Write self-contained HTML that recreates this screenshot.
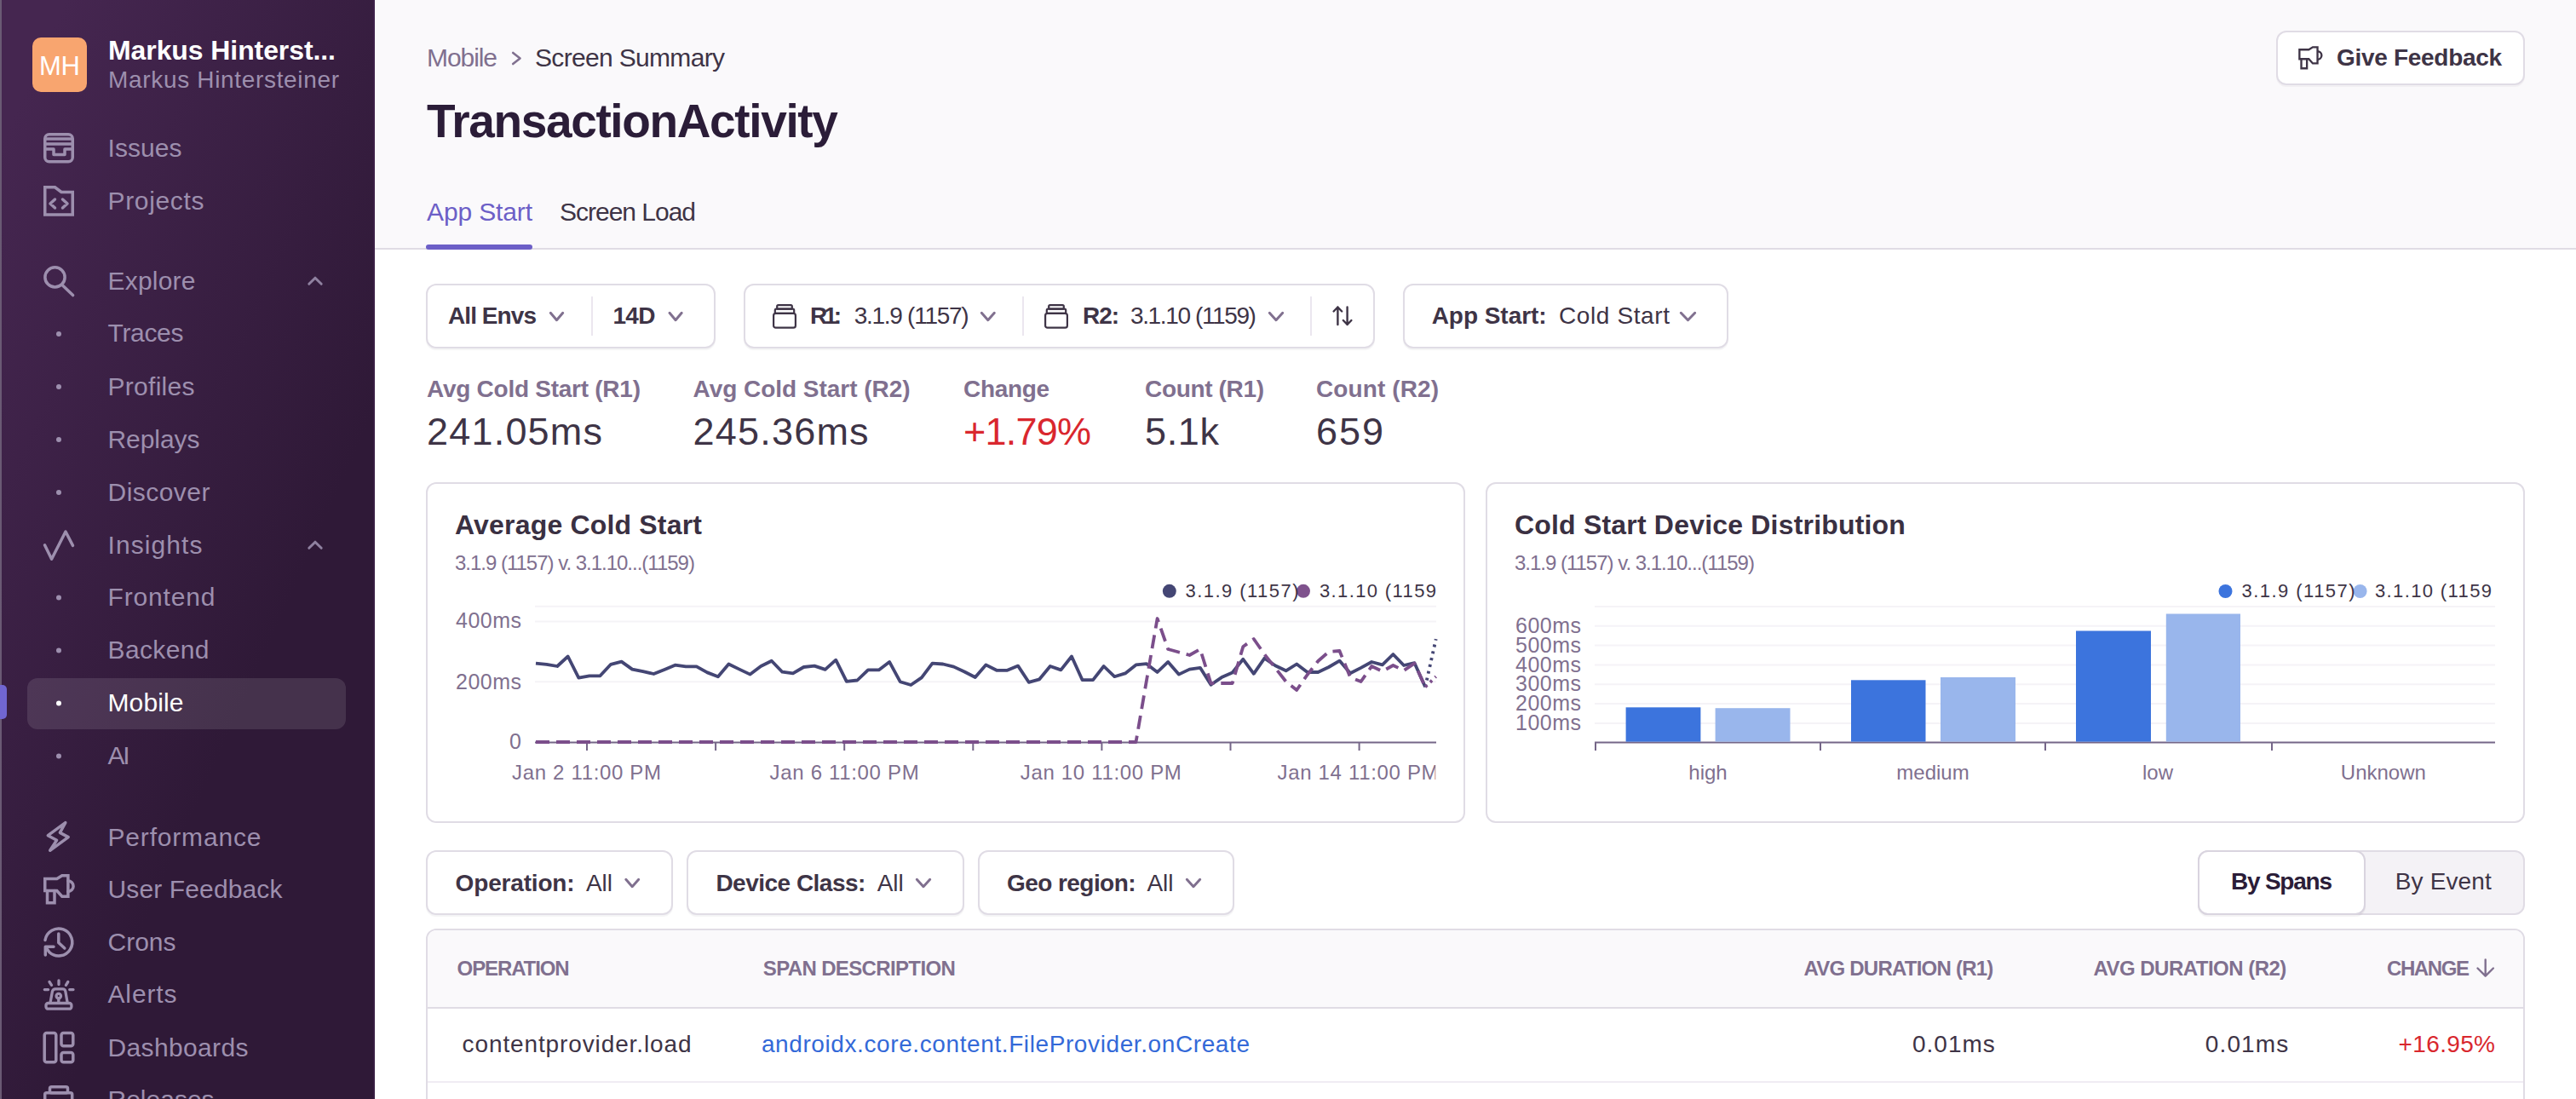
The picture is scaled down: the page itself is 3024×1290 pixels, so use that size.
<!DOCTYPE html>
<html><head><meta charset="utf-8">
<style>
html,body{margin:0;padding:0;}
body{width:3024px;height:1290px;overflow:hidden;position:relative;background:#ffffff;font-family:"Liberation Sans",sans-serif;}
.t{position:absolute;line-height:1;white-space:nowrap;}
.a{position:absolute;}
.box{position:absolute;box-sizing:border-box;border:2px solid #e0dce5;border-radius:12px;background:#fff;}
svg{position:absolute;overflow:visible;}
</style></head><body>
<!-- SIDEBAR -->
<div class="a" style="left:0;top:0;width:440px;height:1290px;background:linear-gradient(294.17deg,#2f1937 35.57%,#452650 92.42%,#452650 92.42%);"></div>
<div class="a" style="left:0;top:0;width:2px;height:1290px;background:#6a5a74;"></div>
<div class="a" style="left:438px;top:0;width:2px;height:1290px;background:rgba(90,50,110,0.22);"></div>
<div class="a" style="left:38px;top:44px;width:64px;height:64px;border-radius:10px;background:#f8a56f;"></div>
<div class="a" style="left:32px;top:796px;width:374px;height:60px;border-radius:12px;background:rgba(255,255,255,0.11);"></div>
<div class="a" style="left:0;top:804px;width:8px;height:40px;border-radius:0 5px 5px 0;background:#7166d2;"></div>
<svg width="440" height="1290" style="left:0;top:0" fill="none" stroke="#9d8fae" stroke-width="3.5" stroke-linecap="round" stroke-linejoin="round">
 <!-- issues -->
 <g transform="translate(51,156)"><rect x="1.75" y="1.75" width="32.5" height="32" rx="5"/><path d="M1.75 7H34.25M1.75 13H34.25M1.75 19H12V25.5H25V19H34.25" stroke-linecap="butt"/></g>
 <!-- projects -->
 <g transform="translate(51,218)"><path d="M1.75 1.75H13.5L21 7.5H34.25V34H1.75Z" stroke-linejoin="miter"/><path d="M13.5 16L8 21L13.5 26M22.5 16L28 21L22.5 26"/></g>
 <!-- explore -->
 <circle cx="64.5" cy="325.4" r="11.6"/><path d="M73.5 335L85.6 346.6"/>
 <!-- insights -->
 <path d="M52.5 639.8L60.6 656.2L77 624L85.5 640.4"/>
 <!-- performance -->
 <path d="M76.8 965.6L56.3 980.7L66.6 986.3L58.7 998.3L80.2 982.6L70.4 977.4Z"/>
 <!-- user feedback -->
 <g transform="translate(51,1026)" stroke-linejoin="miter"><path d="M1.75 5.4H15.8L21.8 1.75H28.9V26.2H21.8L15.8 19.6H1.75Z"/><path d="M28.9 8A6.2 6.2 0 0 1 28.9 20.4"/><path d="M4.5 19.6V33.7H13V19.6"/></g>
 <!-- crons -->
 <path d="M53 1103.5A16 16 0 1 1 58 1117.8L53.8 1112"/><path d="M63 1111.3H53.3V1121"/><path d="M68.8 1096V1106.5L75.8 1113"/>
 <!-- alerts -->
 <g stroke-width="3.3"><rect x="54" y="1177.5" width="29.9" height="6.7" rx="2.5"/><path d="M59.2 1176L61.5 1163.5Q62.3 1160.8 65 1160.8H73.5Q76.2 1160.8 76.8 1163.5L79 1176"/><circle cx="68.8" cy="1169.1" r="2.7"/><path d="M68.8 1172V1176"/><path d="M69 1151V1155.5M58 1152.5L60.5 1156.3M79.8 1152.5L77.4 1156.3M52.3 1161.6H56.6M81.7 1161.6H86"/></g>
 <!-- dashboards -->
 <rect x="52.2" y="1212.5" width="13.6" height="34.2" rx="2.5"/><rect x="72" y="1212.5" width="13.8" height="15.2" rx="2.5"/><rect x="72" y="1235.5" width="13.8" height="11.2" rx="2.5"/>
 <!-- releases -->
 <rect x="58.5" y="1275.7" width="21" height="7" rx="2"/><rect x="52.7" y="1282.7" width="32" height="9" rx="2"/>
 <!-- chevrons -->
 <path d="M362.8 333.3L370 326.2L377.2 333.3" stroke-width="3" stroke="#8f81a0"/>
 <path d="M362.8 643.3L370 636.2L377.2 643.3" stroke-width="3" stroke="#8f81a0"/>
</svg>
<svg width="440" height="1290" style="left:0;top:0" fill="#9d8fae">
 <circle cx="69" cy="392" r="3"/><circle cx="69" cy="454" r="3"/><circle cx="69" cy="516" r="3"/><circle cx="69" cy="578" r="3"/>
 <circle cx="69" cy="701.5" r="3"/><circle cx="69" cy="763.5" r="3"/><circle cx="69" cy="825.5" r="3" fill="#ffffff"/><circle cx="69" cy="887.5" r="3"/>
</svg>
<!-- HEADER -->
<div class="a" style="left:440px;top:0;width:2584px;height:292px;background:#faf9fb;"></div>
<div class="a" style="left:440px;top:291px;width:2584px;height:2px;background:#e0dce5;"></div>
<div class="a" style="left:500px;top:287px;width:125px;height:6px;border-radius:3px;background:#6c5fc7;"></div>
<svg width="20" height="20" style="left:598px;top:58px" fill="none" stroke="#80708f" stroke-width="2.6" stroke-linecap="round" stroke-linejoin="round"><path d="M4.2 4L12.5 10.5L4.2 17"/></svg>
<div class="box" style="left:2672px;top:36px;width:292px;height:64px;box-shadow:0 2px 0 rgba(43,34,51,0.04);"></div>
<svg width="40" height="40" style="left:2694px;top:50px" fill="none" stroke="#3e3446" stroke-width="3" stroke-linejoin="miter">
 <g transform="translate(4,4) scale(0.78)"><path d="M1.75 5.4H15.8L21.8 1.75H28.9V26.2H21.8L15.8 19.6H1.75Z"/><path d="M28.9 8A6.2 6.2 0 0 1 28.9 20.4"/><path d="M4.5 19.6V33.7H13V19.6"/></g>
</svg>
<!--REST-->
<div class="box" style="left:500px;top:333px;width:340px;height:76px;box-shadow:0 2px 1px rgba(43,34,51,0.05);"></div>
<div class="box" style="left:873px;top:333px;width:741px;height:76px;box-shadow:0 2px 1px rgba(43,34,51,0.05);"></div>
<div class="box" style="left:1647px;top:333px;width:382px;height:76px;box-shadow:0 2px 1px rgba(43,34,51,0.05);"></div>
<div class="box" style="left:500px;top:998px;width:290px;height:76px;box-shadow:0 2px 1px rgba(43,34,51,0.05);"></div>
<div class="box" style="left:806px;top:998px;width:326px;height:76px;box-shadow:0 2px 1px rgba(43,34,51,0.05);"></div>
<div class="box" style="left:1148px;top:998px;width:301px;height:76px;box-shadow:0 2px 1px rgba(43,34,51,0.05);"></div>
<div class="a" style="left:694px;top:348px;width:2px;height:46px;background:#ebe6ef;"></div>
<div class="a" style="left:1200px;top:348px;width:2px;height:46px;background:#ebe6ef;"></div>
<div class="a" style="left:1538px;top:348px;width:2px;height:46px;background:#ebe6ef;"></div>
<div class="box" style="left:500px;top:566px;width:1220px;height:400px;"></div>
<div class="box" style="left:1744px;top:566px;width:1220px;height:400px;"></div>
<svg width="3024" height="1290" style="left:0;top:0" fill="none" stroke-linecap="round" stroke-linejoin="round">
<path d="M646.3 367.3L653.5 375.7L660.7 367.3" stroke="#80708f" stroke-width="3"/>
<path d="M786.0 367.3L793.1 375.7L800.2 367.3" stroke="#80708f" stroke-width="3"/>
<path d="M1152.3 367.3L1159.8 375.7L1167.3 367.3" stroke="#80708f" stroke-width="3"/>
<path d="M1490.3 367.3L1498.0 375.7L1505.7 367.3" stroke="#80708f" stroke-width="3"/>
<path d="M1973.3 367.3L1981.5 375.7L1989.7 367.3" stroke="#80708f" stroke-width="3"/>
<path d="M734.8 1032.3L742.2 1040.7L749.7 1032.3" stroke="#80708f" stroke-width="3"/>
<path d="M1076.3 1032.3L1084.0 1040.7L1091.7 1032.3" stroke="#80708f" stroke-width="3"/>
<path d="M1393.3 1032.3L1401.0 1040.7L1408.7 1032.3" stroke="#80708f" stroke-width="3"/>
<g transform="translate(907,357)" stroke="#3e3446" stroke-width="2.2"><rect x="5.2" y="1.1" width="17.6" height="4.6" rx="1.5"/><rect x="2.8" y="5.7" width="22.4" height="5.2" rx="1.5"/><rect x="1.1" y="10.9" width="25.8" height="16.8" rx="2.5"/></g>
<g transform="translate(1226,357)" stroke="#3e3446" stroke-width="2.2"><rect x="5.2" y="1.1" width="17.6" height="4.6" rx="1.5"/><rect x="2.8" y="5.7" width="22.4" height="5.2" rx="1.5"/><rect x="1.1" y="10.9" width="25.8" height="16.8" rx="2.5"/></g>
<g stroke="#3e3446" stroke-width="2.4"><path d="M1570.4 360.5V381M1565.6 365.5L1570.4 360.5L1575.2 365.5"/><path d="M1581.6 360.5V381M1576.8 376L1581.6 381L1586.4 376"/></g>
</svg>
<!--REST2-->
<div class="a" style="left:500px;top:1090px;width:2464px;height:400px;box-sizing:border-box;border:2px solid #e0dce5;border-radius:12px;background:#fff;overflow:hidden;"><div class="a" style="left:0;top:0;width:100%;height:90px;background:#faf9fb;border-bottom:2px solid #e0dce5;"></div><div class="a" style="left:0;top:177px;width:100%;height:2px;background:#f0ecf3;"></div></div>
<div class="a" style="left:2580px;top:998px;width:384px;height:76px;box-sizing:border-box;border:2px solid #e0dce5;border-radius:12px;background:#f4f2f6;"></div>
<div class="a" style="left:2580px;top:998px;width:197px;height:76px;box-sizing:border-box;border:2px solid #d9d4df;border-radius:12px;background:#fff;box-shadow:0 2px 1px rgba(43,34,51,0.06);"></div>
<svg width="3024" height="1290" style="left:0;top:0" fill="none" stroke-linecap="round" stroke-linejoin="round"><path d="M2917.7 1126.5V1145.5M2908.5 1136.5L2917.7 1145.7L2926.9 1136.5" stroke="#80708f" stroke-width="2.4"/></svg>
<!--ENDREST2-->
<!--CHARTS-->
<svg width="3024" height="1290" style="left:0;top:0" fill="none">
<path d="M628 711.8H1686" stroke="#f5f3f7" stroke-width="2"/>
<path d="M628 729.5H1686" stroke="#f5f3f7" stroke-width="2"/>
<path d="M628 800.3H1686" stroke="#f5f3f7" stroke-width="2"/>
<path d="M628 871.6H1686" stroke="#756688" stroke-width="2"/>
<path d="M689.0 871V881" stroke="#756688" stroke-width="2"/>
<path d="M840.1 871V881" stroke="#756688" stroke-width="2"/>
<path d="M991.2 871V881" stroke="#756688" stroke-width="2"/>
<path d="M1142.3 871V881" stroke="#756688" stroke-width="2"/>
<path d="M1293.4 871V881" stroke="#756688" stroke-width="2"/>
<path d="M1444.5 871V881" stroke="#756688" stroke-width="2"/>
<path d="M1595.6 871V881" stroke="#756688" stroke-width="2"/>
<polyline points="629.0,778.6 641.6,779.8 654.2,782.0 666.7,770.5 679.3,795.6 691.9,793.3 704.5,793.3 717.1,779.8 729.6,776.6 742.2,785.6 754.8,788.1 767.4,791.0 780.0,785.9 792.5,780.7 805.1,782.4 817.7,782.4 830.3,789.4 842.9,794.2 855.4,779.5 868.0,785.6 880.6,791.6 893.2,782.0 905.8,775.7 918.3,788.7 930.9,790.4 943.5,783.0 956.1,781.6 968.7,785.9 981.2,774.7 993.8,799.9 1006.4,798.5 1019.0,786.4 1031.6,786.4 1044.1,776.9 1056.7,800.2 1069.3,804.0 1081.9,795.4 1094.5,778.6 1107.0,779.5 1119.6,782.6 1132.2,788.5 1144.8,795.0 1157.3,780.4 1169.9,786.8 1182.5,786.8 1195.1,781.6 1207.7,800.8 1220.2,797.3 1232.8,782.0 1245.4,786.4 1258.0,770.5 1270.6,798.2 1283.1,798.2 1295.7,782.0 1308.3,794.2 1320.9,790.4 1333.5,780.4 1346.0,779.2 1358.6,789.0 1371.2,776.9 1383.8,791.6 1396.4,785.6 1408.9,783.8 1421.5,803.8 1434.1,795.1 1446.7,789.4 1459.3,773.8 1471.8,790.8 1484.4,772.6 1497.0,781.3 1509.6,787.3 1522.2,779.5 1534.7,789.0 1547.3,789.0 1559.9,783.0 1572.5,775.6 1585.1,790.3 1597.6,783.9 1610.2,777.0 1622.8,780.4 1635.4,768.0 1648.0,781.0 1660.5,778.2 1673.1,806.3" stroke="#444674" stroke-width="3.8" stroke-linejoin="round"/>
<polyline points="1673.1,806.3 1685.7,750.1" stroke="#444674" stroke-width="3.8" stroke-dasharray="3 5"/>
<polyline points="629.0,871.0 641.6,871.0 654.2,871.0 666.7,871.0 679.3,871.0 691.9,871.0 704.5,871.0 717.1,871.0 729.6,871.0 742.2,871.0 754.8,871.0 767.4,871.0 780.0,871.0 792.5,871.0 805.1,871.0 817.7,871.0 830.3,871.0 842.9,871.0 855.4,871.0 868.0,871.0 880.6,871.0 893.2,871.0 905.8,871.0 918.3,871.0 930.9,871.0 943.5,871.0 956.1,871.0 968.7,871.0 981.2,871.0 993.8,871.0 1006.4,871.0 1019.0,871.0 1031.6,871.0 1044.1,871.0 1056.7,871.0 1069.3,871.0 1081.9,871.0 1094.5,871.0 1107.0,871.0 1119.6,871.0 1132.2,871.0 1144.8,871.0 1157.3,871.0 1169.9,871.0 1182.5,871.0 1195.1,871.0 1207.7,871.0 1220.2,871.0 1232.8,871.0 1245.4,871.0 1258.0,871.0 1270.6,871.0 1283.1,871.0 1295.7,871.0 1308.3,871.0 1320.9,871.0 1333.5,871.0 1346.0,798.5 1358.6,726.0 1371.2,762.0 1383.8,765.5 1396.4,769.0 1408.9,762.0 1421.5,802.0 1434.1,802.0 1446.7,802.0 1459.3,759.0 1471.8,750.0 1484.4,768.0 1497.0,784.0 1509.6,800.0 1522.2,810.0 1534.7,792.0 1547.3,776.0 1559.9,765.0 1572.5,764.0 1585.1,795.0 1597.6,800.0 1610.2,782.0 1622.8,788.0 1635.4,781.0 1648.0,787.0 1660.5,778.7 1673.1,806.3" stroke="#7b4e8b" stroke-width="3.8" stroke-dasharray="16 8" stroke-linejoin="round"/>
<polyline points="1673.1,806.3 1685.7,794.2" stroke="#7b4e8b" stroke-width="3.8" stroke-dasharray="3 5"/>
<circle cx="1372.8" cy="693.8" r="8" fill="#444674"/><circle cx="1530" cy="693.8" r="8" fill="#7f528d"/>
<circle cx="2612.5" cy="694" r="8" fill="#3c74dd"/><circle cx="2770.6" cy="694" r="8" fill="#99b6ec"/>
<path d="M1872 849.0H2929" stroke="#f5f3f7" stroke-width="2"/>
<path d="M1872 826.1H2929" stroke="#f5f3f7" stroke-width="2"/>
<path d="M1872 803.3H2929" stroke="#f5f3f7" stroke-width="2"/>
<path d="M1872 780.5H2929" stroke="#f5f3f7" stroke-width="2"/>
<path d="M1872 757.6H2929" stroke="#f5f3f7" stroke-width="2"/>
<path d="M1872 734.8H2929" stroke="#f5f3f7" stroke-width="2"/>
<path d="M1872 712.0H2929" stroke="#f5f3f7" stroke-width="2"/>
<path d="M1872 871.6H2929" stroke="#756688" stroke-width="2"/>
<path d="M1873 871V881" stroke="#756688" stroke-width="2"/>
<path d="M2137 871V881" stroke="#756688" stroke-width="2"/>
<path d="M2401 871V881" stroke="#756688" stroke-width="2"/>
<path d="M2667 871V881" stroke="#756688" stroke-width="2"/>
<rect x="1908.6" y="830.3" width="87.8" height="40.3" fill="#3c74dd"/>
<rect x="2013.6" y="831.2" width="87.9" height="39.4" fill="#99b6ec"/>
<rect x="2173" y="798.3" width="87.5" height="72.3" fill="#3c74dd"/>
<rect x="2278" y="795" width="88.0" height="75.6" fill="#99b6ec"/>
<rect x="2437" y="740.5" width="88.0" height="130.1" fill="#3c74dd"/>
<rect x="2542.8" y="720.5" width="87.2" height="150.1" fill="#99b6ec"/>
</svg>
<span class="t" style="left:127.0px;top:42.9px;font-size:32px;color:#ffffff;font-weight:700;letter-spacing:-0.09px;">Markus Hinterst...</span>
<span class="t" style="left:127.0px;top:80.3px;font-size:28px;color:#9d8fae;letter-spacing:0.67px;">Markus Hintersteiner</span>
<span class="t" style="left:126.5px;top:159.2px;font-size:30px;color:#9d8fae;letter-spacing:0.06px;">Issues</span>
<span class="t" style="left:126.5px;top:220.6px;font-size:30px;color:#9d8fae;letter-spacing:0.66px;">Projects</span>
<span class="t" style="left:126.5px;top:314.6px;font-size:30px;color:#9d8fae;letter-spacing:0.21px;">Explore</span>
<span class="t" style="left:126.5px;top:376.2px;font-size:30px;color:#9d8fae;letter-spacing:-0.32px;">Traces</span>
<span class="t" style="left:126.5px;top:439.2px;font-size:30px;color:#9d8fae;letter-spacing:0.28px;">Profiles</span>
<span class="t" style="left:126.5px;top:501.0px;font-size:30px;color:#9d8fae;letter-spacing:-0.07px;">Replays</span>
<span class="t" style="left:126.5px;top:562.8px;font-size:30px;color:#9d8fae;letter-spacing:0.47px;">Discover</span>
<span class="t" style="left:126.5px;top:624.6px;font-size:30px;color:#9d8fae;letter-spacing:1.09px;">Insights</span>
<span class="t" style="left:126.5px;top:686.4px;font-size:30px;color:#9d8fae;letter-spacing:0.85px;">Frontend</span>
<span class="t" style="left:126.5px;top:748.2px;font-size:30px;color:#9d8fae;letter-spacing:0.38px;">Backend</span>
<span class="t" style="left:126.5px;top:810.0px;font-size:30px;color:#ffffff;letter-spacing:0.12px;">Mobile</span>
<span class="t" style="left:126.5px;top:871.8px;font-size:30px;color:#9d8fae;letter-spacing:-2.36px;">AI</span>
<span class="t" style="left:126.5px;top:967.9px;font-size:30px;color:#9d8fae;letter-spacing:0.82px;">Performance</span>
<span class="t" style="left:126.5px;top:1029.3px;font-size:30px;color:#9d8fae;letter-spacing:0.13px;">User Feedback</span>
<span class="t" style="left:126.5px;top:1091.0px;font-size:30px;color:#9d8fae;">Crons</span>
<span class="t" style="left:126.5px;top:1152.4px;font-size:30px;color:#9d8fae;letter-spacing:0.86px;">Alerts</span>
<span class="t" style="left:126.5px;top:1214.5px;font-size:30px;color:#9d8fae;letter-spacing:0.36px;">Dashboards</span>
<span class="t" style="left:126.5px;top:1276.1px;font-size:30px;color:#9d8fae;">Releases</span>
<span class="t" style="left:46.0px;top:61.8px;font-size:31px;color:#ffffff;letter-spacing:-0.22px;">MH</span>
<span class="t" style="left:501.0px;top:52.6px;font-size:30px;color:#80708f;letter-spacing:-1.07px;">Mobile</span>
<span class="t" style="left:628.0px;top:52.6px;font-size:30px;color:#3e3446;letter-spacing:-0.67px;">Screen Summary</span>
<span class="t" style="left:501.0px;top:115.4px;font-size:55px;color:#2b1d38;font-weight:700;letter-spacing:-1.36px;">TransactionActivity</span>
<span class="t" style="left:501.0px;top:233.6px;font-size:30px;color:#6c5fc7;letter-spacing:-0.13px;">App Start</span>
<span class="t" style="left:657.0px;top:233.6px;font-size:30px;color:#3e3446;letter-spacing:-1.01px;">Screen Load</span>
<span class="t" style="left:2743.0px;top:53.7px;font-size:28px;color:#3e3446;font-weight:700;letter-spacing:-0.30px;">Give Feedback</span>
<span class="t" style="left:526.0px;top:356.8px;font-size:28px;color:#3e3446;font-weight:700;letter-spacing:-0.93px;">All Envs</span>
<span class="t" style="left:719.4px;top:356.8px;font-size:28px;color:#3e3446;font-weight:700;letter-spacing:-0.69px;">14D</span>
<span class="t" style="left:951.0px;top:356.8px;font-size:28px;color:#3e3446;font-weight:700;letter-spacing:-4.06px;">R1:</span>
<span class="t" style="left:1002.7px;top:356.8px;font-size:28px;color:#3e3446;letter-spacing:-1.27px;">3.1.9 (1157)</span>
<span class="t" style="left:1271.0px;top:356.8px;font-size:28px;color:#3e3446;font-weight:700;letter-spacing:-1.06px;">R2:</span>
<span class="t" style="left:1327.0px;top:356.8px;font-size:28px;color:#3e3446;letter-spacing:-1.38px;">3.1.10 (1159)</span>
<span class="t" style="left:1680.7px;top:356.8px;font-size:28px;color:#3e3446;font-weight:700;letter-spacing:-0.04px;">App Start:</span>
<span class="t" style="left:1830.0px;top:356.8px;font-size:28px;color:#3e3446;letter-spacing:0.61px;">Cold Start</span>
<span class="t" style="left:501.0px;top:443.3px;font-size:28px;color:#80708f;font-weight:700;letter-spacing:-0.26px;">Avg Cold Start (R1)</span>
<span class="t" style="left:501.0px;top:483.9px;font-size:45px;color:#3e3446;letter-spacing:1.20px;">241.05ms</span>
<span class="t" style="left:813.6px;top:443.3px;font-size:28px;color:#80708f;font-weight:700;letter-spacing:-0.04px;">Avg Cold Start (R2)</span>
<span class="t" style="left:813.6px;top:483.9px;font-size:45px;color:#3e3446;letter-spacing:1.20px;">245.36ms</span>
<span class="t" style="left:1131.0px;top:443.3px;font-size:28px;color:#80708f;font-weight:700;letter-spacing:-0.34px;">Change</span>
<span class="t" style="left:1131.0px;top:483.9px;font-size:45px;color:#d9272e;letter-spacing:-0.78px;">+1.79%</span>
<span class="t" style="left:1344.0px;top:443.3px;font-size:28px;color:#80708f;font-weight:700;letter-spacing:-0.34px;">Count (R1)</span>
<span class="t" style="left:1344.0px;top:483.9px;font-size:45px;color:#3e3446;letter-spacing:0.65px;">5.1k</span>
<span class="t" style="left:1545.0px;top:443.3px;font-size:28px;color:#80708f;font-weight:700;letter-spacing:0.10px;">Count (R2)</span>
<span class="t" style="left:1545.0px;top:483.9px;font-size:45px;color:#3e3446;letter-spacing:1.95px;">659</span>
<span class="t" style="left:534.0px;top:599.9px;font-size:32px;color:#3a3042;font-weight:700;letter-spacing:0.18px;">Average Cold Start</span>
<span class="t" style="left:534.0px;top:648.7px;font-size:24px;color:#80708f;letter-spacing:-1.01px;">3.1.9 (1157) v. 3.1.10...(1159)</span>
<span class="t" style="left:1778.0px;top:599.9px;font-size:32px;color:#3a3042;font-weight:700;letter-spacing:0.19px;">Cold Start Device Distribution</span>
<span class="t" style="left:1778.0px;top:648.7px;font-size:24px;color:#80708f;letter-spacing:-1.01px;">3.1.9 (1157) v. 3.1.10...(1159)</span>
<span class="t" style="left:1391.5px;top:683.4px;font-size:22px;color:#3e3446;letter-spacing:1.45px;">3.1.9 (1157)</span>
<span class="t" style="left:1549.0px;top:683.4px;font-size:22px;color:#3e3446;letter-spacing:1.37px;">3.1.10 (1159</span>
<span class="t" style="left:2631.6px;top:683.4px;font-size:22px;color:#3e3446;letter-spacing:1.45px;">3.1.9 (1157)</span>
<span class="t" style="left:2788.0px;top:683.4px;font-size:22px;color:#3e3446;letter-spacing:1.37px;">3.1.10 (1159</span>
<span class="t" style="left:535.0px;top:716.3px;font-size:25px;color:#80708f;letter-spacing:0.49px;">400ms</span>
<span class="t" style="left:535.0px;top:787.8px;font-size:25px;color:#80708f;letter-spacing:0.49px;">200ms</span>
<span class="t" style="left:598.1px;top:858.3px;font-size:25px;color:#80708f;">0</span>
<span class="t" style="left:601.0px;top:895.2px;font-size:24px;color:#80708f;letter-spacing:0.67px;">Jan 2 11:00 PM</span>
<span class="t" style="left:903.6px;top:895.2px;font-size:24px;color:#80708f;letter-spacing:0.67px;">Jan 6 11:00 PM</span>
<span class="t" style="left:1197.8px;top:895.2px;font-size:24px;color:#80708f;letter-spacing:0.67px;">Jan 10 11:00 PM</span>
<span class="t" style="left:1499.5px;top:895.2px;font-size:24px;color:#80708f;letter-spacing:0.67px;clip-path:inset(0 4px 0 0);">Jan 14 11:00 PM</span>
<span class="t" style="left:1779.0px;top:722.0px;font-size:25px;color:#80708f;letter-spacing:0.49px;">600ms</span>
<span class="t" style="left:1779.0px;top:744.8px;font-size:25px;color:#80708f;letter-spacing:0.49px;">500ms</span>
<span class="t" style="left:1779.0px;top:767.6px;font-size:25px;color:#80708f;letter-spacing:0.49px;">400ms</span>
<span class="t" style="left:1779.0px;top:790.4px;font-size:25px;color:#80708f;letter-spacing:0.49px;">300ms</span>
<span class="t" style="left:1779.0px;top:813.3px;font-size:25px;color:#80708f;letter-spacing:0.49px;">200ms</span>
<span class="t" style="left:1779.0px;top:836.1px;font-size:25px;color:#80708f;letter-spacing:0.49px;">100ms</span>
<span class="t" style="left:1982.3px;top:895.2px;font-size:24px;color:#80708f;">high</span>
<span class="t" style="left:2226.3px;top:895.2px;font-size:24px;color:#80708f;">medium</span>
<span class="t" style="left:2515.0px;top:895.2px;font-size:24px;color:#80708f;">low</span>
<span class="t" style="left:2747.8px;top:895.2px;font-size:24px;color:#80708f;">Unknown</span>
<span class="t" style="left:534.6px;top:1022.8px;font-size:28px;color:#3e3446;font-weight:700;letter-spacing:-0.17px;">Operation:</span>
<span class="t" style="left:688.0px;top:1022.8px;font-size:28px;color:#3e3446;letter-spacing:-0.06px;">All</span>
<span class="t" style="left:840.4px;top:1022.8px;font-size:28px;color:#3e3446;font-weight:700;letter-spacing:-0.51px;">Device Class:</span>
<span class="t" style="left:1029.7px;top:1022.8px;font-size:28px;color:#3e3446;letter-spacing:-0.06px;">All</span>
<span class="t" style="left:1182.0px;top:1022.8px;font-size:28px;color:#3e3446;font-weight:700;letter-spacing:-0.56px;">Geo region:</span>
<span class="t" style="left:1346.5px;top:1022.8px;font-size:28px;color:#3e3446;letter-spacing:-0.06px;">All</span>
<span class="t" style="left:2619.0px;top:1021.3px;font-size:28px;color:#2b1d38;font-weight:700;letter-spacing:-1.23px;">By Spans</span>
<span class="t" style="left:2811.8px;top:1021.3px;font-size:28px;color:#3e3446;letter-spacing:0.13px;">By Event</span>
<span class="t" style="left:536.6px;top:1125.2px;font-size:24px;color:#80708f;font-weight:700;letter-spacing:-1.11px;">OPERATION</span>
<span class="t" style="left:895.8px;top:1125.2px;font-size:24px;color:#80708f;font-weight:700;letter-spacing:-0.64px;">SPAN DESCRIPTION</span>
<span class="t" style="left:2117.4px;top:1125.2px;font-size:24px;color:#80708f;font-weight:700;letter-spacing:-0.76px;">AVG DURATION (R1)</span>
<span class="t" style="left:2457.4px;top:1125.2px;font-size:24px;color:#80708f;font-weight:700;letter-spacing:-0.51px;">AVG DURATION (R2)</span>
<span class="t" style="left:2802.0px;top:1125.2px;font-size:24px;color:#80708f;font-weight:700;letter-spacing:-1.40px;">CHANGE</span>
<span class="t" style="left:542.6px;top:1211.6px;font-size:28px;color:#3e3446;letter-spacing:0.88px;">contentprovider.load</span>
<span class="t" style="left:893.9px;top:1211.6px;font-size:28px;color:#3369d8;letter-spacing:0.60px;">androidx.core.content.FileProvider.onCreate</span>
<span class="t" style="left:2244.9px;top:1211.6px;font-size:28px;color:#3e3446;letter-spacing:1.03px;">0.01ms</span>
<span class="t" style="left:2588.8px;top:1211.6px;font-size:28px;color:#3e3446;letter-spacing:1.13px;">0.01ms</span>
<span class="t" style="left:2815.6px;top:1211.6px;font-size:28px;color:#d9272e;letter-spacing:0.35px;">+16.95%</span>
</body></html>
